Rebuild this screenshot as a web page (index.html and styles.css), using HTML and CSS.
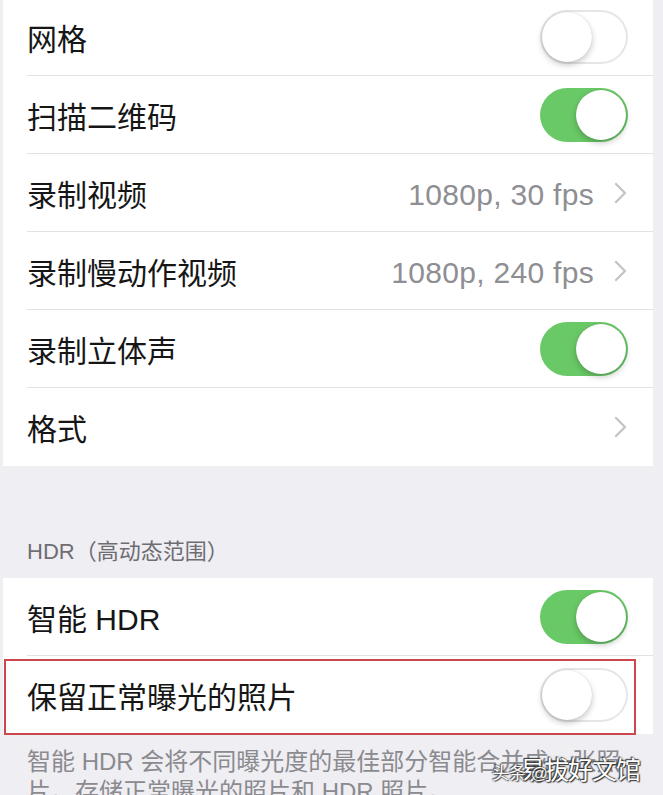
FILE: index.html
```html
<!DOCTYPE html>
<html lang="zh">
<head>
<meta charset="utf-8">
<link rel="stylesheet" href="styles.css">
</head>
<body>
<div class="page">
  <div class="group group-top">
    <div class="row"><span class="label">网格</span><span class="toggle"><span class="knob"></span></span></div>
    <div class="row"><span class="label">扫描二维码</span><span class="toggle on"><span class="knob"></span></span></div>
    <div class="row"><span class="label">录制视频</span><span class="value">1080p, 30 fps</span><span class="chev"><svg width="13" height="22" viewBox="0 0 13 22"><path d="M2 2 L11 11 L2 20" fill="none" stroke="#c4c4c9" stroke-width="2.4" stroke-linecap="round" stroke-linejoin="round"/></svg></span></div>
    <div class="row"><span class="label">录制慢动作视频</span><span class="value">1080p, 240 fps</span><span class="chev"><svg width="13" height="22" viewBox="0 0 13 22"><path d="M2 2 L11 11 L2 20" fill="none" stroke="#c4c4c9" stroke-width="2.4" stroke-linecap="round" stroke-linejoin="round"/></svg></span></div>
    <div class="row"><span class="label">录制立体声</span><span class="toggle on"><span class="knob"></span></span></div>
    <div class="row"><span class="label">格式</span><span class="value"></span><span class="chev"><svg width="13" height="22" viewBox="0 0 13 22"><path d="M2 2 L11 11 L2 20" fill="none" stroke="#c4c4c9" stroke-width="2.4" stroke-linecap="round" stroke-linejoin="round"/></svg></span></div>
  </div>
  <div class="section-header">HDR（高动态范围）</div>
  <div class="group">
    <div class="row"><span class="label">智能 HDR</span><span class="toggle on"><span class="knob"></span></span></div>
    <div class="row marked"><span class="label">保留正常曝光的照片</span><span class="toggle"><span class="knob"></span></span><span class="highlight"></span></div>
  </div>
  <p class="footer">智能 HDR 会将不同曝光度的最佳部分智能合并成一张照片。存储正常曝光的照片和 HDR 照片。</p>
  <div class="watermark"><span class="wm-small">头条 @</span><span class="wm-big">易拔好文馆</span></div>
</div>
</body>
</html>
```
FILE: styles.css
```css
html, body {
  margin: 0;
  padding: 0;
  background: #efeef2;
}
.page {
  position: relative;
  width: 663px;
  height: 795px;
  overflow: hidden;
  font-family: "Liberation Sans", "Noto Sans CJK SC", sans-serif;
}
.group {
  background: #fff;
  margin: 0 10px 0 3px;
}
.group-top {
  margin-top: -2px;
}
.row {
  position: relative;
  box-sizing: border-box;
  height: 78px;
  margin-left: 24px;
  padding-right: 25px;
  display: flex;
  align-items: center;
  border-bottom: 1px solid #e2e2e4;
}
.row:last-child {
  border-bottom: none;
}
.label {
  flex: 1;
  font-size: 30px;
  color: #161616;
}
.value {
  font-size: 30px;
  letter-spacing: 0.3px;
  color: #8e8e93;
  margin-right: 20px;
  padding-top: 4px;
}
.chev {
  display: flex;
  align-items: center;
  margin-right: 1px;
}
.toggle {
  position: relative;
  width: 88px;
  height: 54px;
  border-radius: 27px;
  background: #fff;
  box-shadow: inset 0 0 0 2px #e6e6e8;
}
.toggle.on {
  background: #69c966;
  box-shadow: none;
}
.knob {
  position: absolute;
  top: 2px;
  left: 2px;
  width: 50px;
  height: 50px;
  border-radius: 50%;
  background: #fff;
  box-shadow: 0 3px 6px rgba(0,0,0,0.22), 0 0 1px rgba(0,0,0,0.2);
}
.toggle.on .knob {
  left: 36px;
}
.highlight {
  position: absolute;
  left: -23px;
  right: 17px;
  top: 3px;
  bottom: -1px;
  border: 2px solid #c9474d;
}
.section-header {
  padding: 72px 0 12px 27px;
  font-size: 22px;
  line-height: 28px;
  color: #6d6d72;
}
.footer {
  margin: 0;
  padding: 13px 20px 0 27px;
  font-size: 24px;
  line-height: 30px;
  color: #8a8a8f;
}
.watermark {
  position: absolute;
  left: 492px;
  top: 750px;
  display: flex;
  align-items: baseline;
  white-space: nowrap;
  color: #fff;
  text-shadow: 0 0 2px #333, 1px 1px 1px #333, -1px -1px 1px #333;
}
.wm-small {
  font-size: 17px;
  opacity: 0.85;
}
.wm-big {
  font-size: 25px;
  letter-spacing: -1px;
  margin-left: -28px;
}
```
